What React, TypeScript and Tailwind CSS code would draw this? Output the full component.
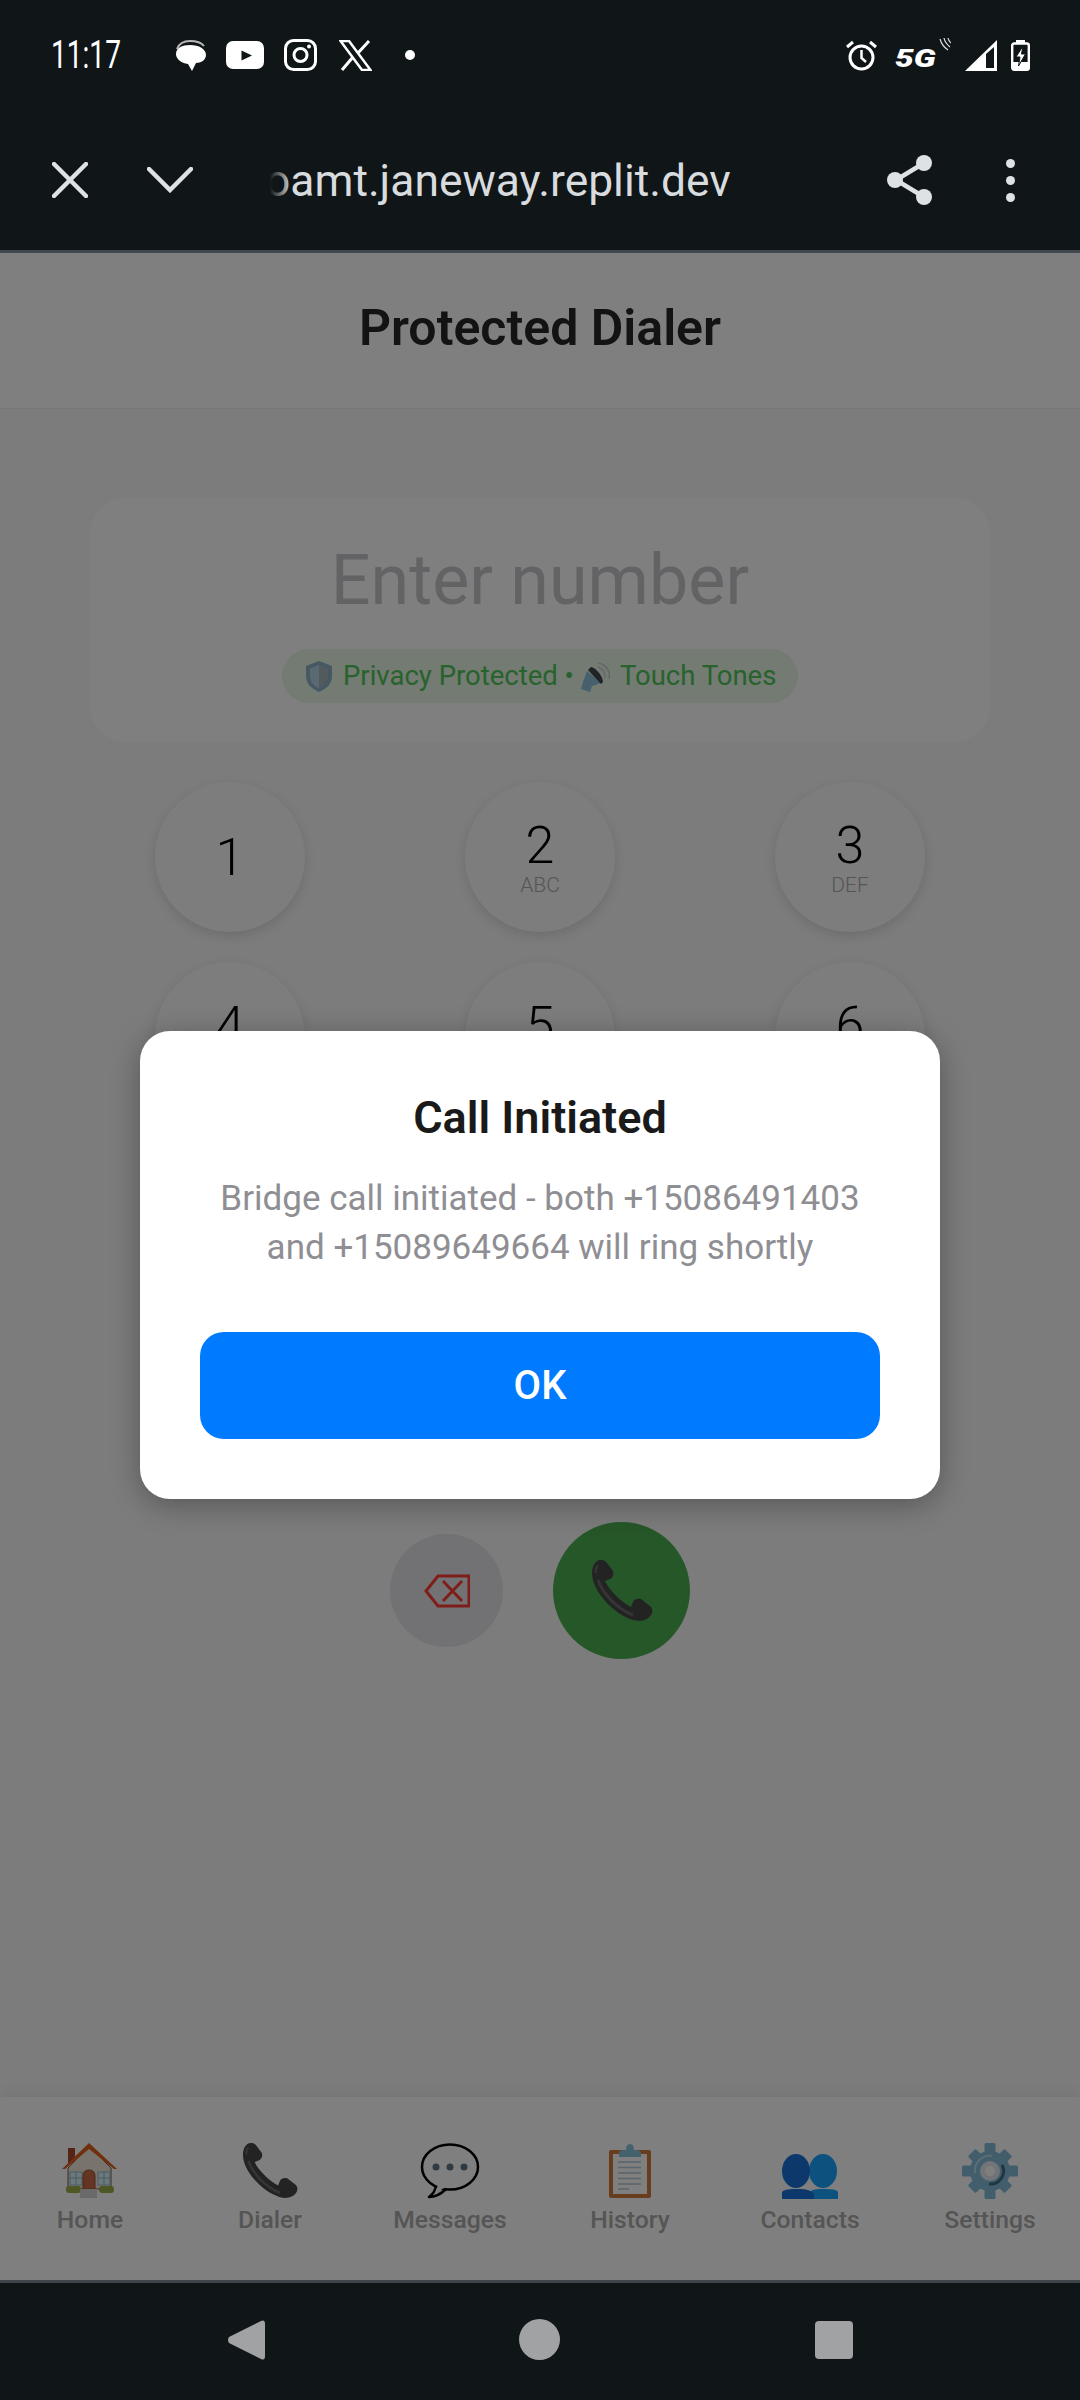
// keys in the last two rows sit fully behind the alert, so they carry no text
const keys = [
  [['1', ''], ['2', 'ABC'], ['3', 'DEF']],
  [['4', '\u00a0'], ['5', '\u00a0'], ['6', '\u00a0']],
  [['', ''], ['', ''], ['', '']],
  [['', ''], ['', ''], ['', '']],
];

function HomeEmoji() {
  return (
    <svg width="56" height="56" viewBox="0 0 56 56">
      <rect x="6" y="5" width="7" height="15" fill="#a84a2c" />
      <path d="M27 3 L6 25 V46 H49 V25 Z" fill="#f0e8da" stroke="#6a5a4c" strokeWidth="1" />
      <path d="M0 26 L27 0 L55 26 L52 26 L27 6 L3 26 Z" fill="#e0601c" />
      <rect x="8" y="29" width="12" height="13" fill="#d8f2fa" stroke="#8fb8c8" strokeWidth="1" />
      <rect x="36" y="29" width="12" height="13" fill="#d8f2fa" stroke="#8fb8c8" strokeWidth="1" />
      <path d="M14 29 V42 M8 35 H20 M42 29 V42 M36 35 H48" stroke="#8fb8c8" strokeWidth="1" />
      <path d="M21 46 V33 Q21 27 27 27 Q33 27 33 33 V46 Z" fill="#c86a46" stroke="#9a4a2c" strokeWidth="1" />
      <rect x="4" y="43" width="15" height="7" rx="3" fill="#9ab04a" />
      <rect x="37" y="43" width="15" height="7" rx="3" fill="#9ab04a" />
      <rect x="18" y="46" width="17" height="9" fill="#d4d4d4" />
    </svg>
  );
}

function PhoneGlyph({ size, fill, shine }: { size: number; fill: string; shine: string }) {
  return (
    <svg width={size} height={size} viewBox="0 0 62 62">
      <path d="M6 1 C10 -1 14 0 16 3 L22 11 C23 14 22 18 19 19 L14 21 C18 30 30 42 40 47 L42 42 C43 39 47 38 50 39 L59 46 C62 49 62 52 60 55 C57 60 50 62 42 60 C25 55 6 36 2 20 C0 12 1 5 6 1 Z" fill={fill} />
      <path d="M7 20 C12 34 26 49 42 55" stroke={shine} strokeWidth="3" fill="none" />
      <path d="M7 5 Q4 9 5 13" stroke={shine} strokeWidth="2" fill="none" />
    </svg>
  );
}

function BubbleEmoji() {
  return (
    <svg width="60" height="56" viewBox="0 0 60 56">
      <path d="M16 41 Q16 49 9 54 Q18 54 26 46" fill="#ffffff" stroke="#000" strokeWidth="2.500" strokeLinejoin="round" />
      <ellipse cx="30" cy="24" rx="28" ry="22.500" fill="#ffffff" stroke="#000" strokeWidth="2.500" />
      <path d="M18 42 L15 50 L26 44 Z" fill="#ffffff" />
      <circle cx="16" cy="24" r="3.500" fill="#5f7484" />
      <circle cx="30" cy="24" r="3.500" fill="#5f7484" />
      <circle cx="44" cy="24" r="3.500" fill="#5f7484" />
    </svg>
  );
}

function ClipboardEmoji() {
  return (
    <svg width="42" height="55" viewBox="0 0 42 55">
      <rect x="0" y="6" width="42" height="48" rx="2" fill="#cf7a3a" />
      <rect x="4" y="10" width="34" height="40" fill="#ffffff" />
      <path d="M9 18H32M9 23.500H32M9 29H32M9 34.500H32M9 40H32M9 45H20" stroke="#b4c8d4" strokeWidth="1.500" />
      <path d="M10 13 H32 V9 Q32 6 27 6 H25 Q25 0 21 0 Q17 0 17 6 H15 Q10 6 10 9 Z" fill="#88c4d6" />
    </svg>
  );
}

function PeopleEmoji() {
  return (
    <svg width="56" height="45" viewBox="0 0 56 45">
      <ellipse cx="41" cy="17" rx="14" ry="17" fill="#1aa4ff" />
      <path d="M26 45 V39 Q30 35 38 35 H44 Q55 35 56 38 V45 Z" fill="#1aa4ff" />
      <ellipse cx="14" cy="17" rx="14" ry="17" fill="#1870d8" />
      <path d="M0 45 V38 Q2 35 12 35 H18 Q28 35 32 40 V45 Z" fill="#1870d8" />
    </svg>
  );
}

function GearEmoji() {
  return (
    <svg width="56" height="56" viewBox="0 0 56 56">
      <g fill="#84bcd8">
        <circle cx="28" cy="28" r="20" />
        <rect x="22.500" y="0" width="11" height="56" rx="1.500" />
        <rect x="0" y="22.500" width="56" height="11" rx="1.500" />
        <rect x="22.500" y="2" width="11" height="52" rx="1.500" transform="rotate(45 28 28)" />
        <rect x="22.500" y="2" width="11" height="52" rx="1.500" transform="rotate(-45 28 28)" />
      </g>
      <path d="M13 30 A15 15 0 0 1 30 13" stroke="#b4dcec" strokeWidth="2" fill="none" />
      <path d="M40 22 A13 13 0 0 1 27 41" stroke="#3c7084" strokeWidth="3" fill="none" />
      <circle cx="28" cy="28" r="10" fill="#e4eaee" />
      <circle cx="28" cy="28" r="5" fill="#ffffff" />
    </svg>
  );
}

function ShieldEmoji() {
  return (
    <svg width="26" height="31" viewBox="0 0 26 31" className="shrink-0">
      <path d="M13 0 L26 5 V15 C26 23 20 28 13 31 C6 28 0 23 0 15 V5 Z" fill="#8cb0c4" />
      <path d="M13 4 L22 7.500 V15 C22 21 18 25 13 27.500 Z" fill="#a4b4bc" />
      <path d="M13 4 L4 7.500 V15 C4 21 8 25 13 27.500 Z" fill="#b4d4e4" />
    </svg>
  );
}

function SpeakerEmoji() {
  return (
    <svg width="32" height="32" viewBox="0 0 32 32" className="shrink-0">
      <path d="M18 3 A13 13 0 0 1 29 19" stroke="#c8ced2" strokeWidth="1.500" fill="none" />
      <path d="M18 7 A10 10 0 0 1 25 18" stroke="#c8ced2" strokeWidth="1.500" fill="none" />
      <path d="M7 11 L21 23 L12 26 L10 32 L1 29 L3 22 Z" fill="#8cc0dc" />
      <path d="M8 10 L11 7 C15 7 23 16 23 22 L21 24 Z" fill="#40484e" />
    </svg>
  );
}

const tabs = [
  { label: 'Home', icon: <HomeEmoji /> },
  { label: 'Dialer', icon: <PhoneGlyph size={56} fill="#464646" shine="#6a6a6a" /> },
  { label: 'Messages', icon: <BubbleEmoji /> },
  { label: 'History', icon: <ClipboardEmoji /> },
  { label: 'Contacts', icon: <PeopleEmoji /> },
  { label: 'Settings', icon: <GearEmoji /> },
];

function StatusBar() {
  return (
    <div className="h-[84px] flex items-end justify-between pl-[51px] pr-[50px] pb-[13px]">
      <div className="flex items-center">
        <span className="w-[124px] text-[39px] leading-[32px] text-white origin-left scale-x-[0.72]">11:17</span>
        <div className="flex items-center">
          {/* chat bubbles */}
          <svg width="31" height="31" viewBox="0 0 31 31" className="mr-[20px]">
            <path d="M2 9 Q5 1 15 1 Q25 1 29 6" stroke="#b8b8b8" strokeWidth="2" fill="none" />
            <path d="M15 5 C24 5 31 9 31 15 C31 20 26 23 21 23 L17 31 L13 24 C6 23 1 19 1 14 C1 8 7 5 15 5 Z" fill="#fff" />
          </svg>
          {/* youtube */}
          <svg width="38" height="28" viewBox="0 0 38 28" className="mr-[20px]">
            <rect width="38" height="28" rx="7" fill="#fff" />
            <path d="M15.500 9.500 L26 14.500 L15.500 19.500 Z" fill="#101518" />
          </svg>
          {/* instagram */}
          <svg width="33" height="32" viewBox="0 0 33 32" className="mr-[22px]">
            <rect x="1.500" y="1.500" width="30" height="29" rx="8" fill="none" stroke="#fff" strokeWidth="3" />
            <circle cx="16.500" cy="16" r="6.500" fill="none" stroke="#fff" strokeWidth="3" />
            <circle cx="25" cy="7.500" r="2" fill="#fff" />
          </svg>
          {/* x */}
          <svg width="33" height="31" viewBox="0 0 33 31" className="mr-[33px]">
            <path d="M1.500 1 H10 L31.500 30 H23 Z" fill="none" stroke="#fff" strokeWidth="2.500" />
            <path d="M30 1 L19 13 M14 17 L3 30" stroke="#fff" strokeWidth="3" />
          </svg>
          <div className="w-[10px] h-[10px] rounded-full bg-white" />
        </div>
      </div>
      <div className="flex items-center">
        {/* alarm */}
        <svg width="31" height="31" viewBox="0 0 31 31" className="mr-[18px]">
          <circle cx="15.500" cy="17.500" r="11.500" fill="none" stroke="#fff" strokeWidth="3" />
          <path d="M15.500 10 V18 L20 22" fill="none" stroke="#fff" strokeWidth="2.500" />
          <path d="M1 7 L7 2 M30 7 L24 2" stroke="#fff" strokeWidth="3" />
        </svg>
        <div className="relative w-[56px] h-[32px] mr-[14px]">
          <span className="block mt-[3px] text-[26px] leading-[32px] font-black italic text-white origin-left scale-x-[1.28]">5G</span>
          <svg width="12" height="13" viewBox="0 0 12 13" className="absolute left-[44px] -top-[1px]">
            <path d="M1 1 Q3 8 9 12 M5 0 Q6 5 11 9 M9 0 Q9.500 3 12 5" stroke="#ddd" strokeWidth="1.200" fill="none" />
          </svg>
        </div>
        {/* signal */}
        <svg width="32" height="31" viewBox="0 0 32 31" className="mr-[14px]">
          <path d="M32 0 V31 H0 Z" fill="#fff" />
          <path d="M21 14 L29 7 V28 H21 Z" fill="#101518" />
        </svg>
        {/* battery */}
        <svg width="19" height="31" viewBox="0 0 19 31">
          <rect x="5" y="0" width="9" height="4" fill="#fff" />
          <rect x="1.200" y="3.500" width="16.600" height="26.300" rx="2" fill="none" stroke="#fff" strokeWidth="2.400" />
          <rect x="2" y="22" width="15" height="8" fill="#fff" />
          <path d="M12 6 L5 17 H9 L7.500 26 L14.500 14 H10.500 Z" fill="#fff" stroke="#101518" strokeWidth="1" />
        </svg>
      </div>
    </div>
  );
}

function BrowserBar() {
  return (
    <div className="h-[169px] flex items-center border-b-[3px] border-[#41484d] pt-[26px]">
      <svg width="36" height="36" viewBox="0 0 36 36" className="ml-[52px]">
        <path d="M2 2 L34 34 M34 2 L2 34" stroke="#dfe2e4" strokeWidth="4.500" strokeLinecap="round" />
      </svg>
      <svg width="46" height="26" viewBox="0 0 46 26" className="ml-[59px]">
        <path d="M2 2 L23 23 L44 2" stroke="#dfe2e4" strokeWidth="4.500" fill="none" strokeLinecap="round" />
      </svg>
      <div className="relative ml-[77px] mt-[1px] w-[470px] overflow-hidden text-[44.4px] leading-[56px] text-[#d8dcdf] whitespace-nowrap">
        <div className="-ml-[5px]">oamt.janeway.replit.dev</div>
        <div className="absolute inset-y-0 left-0 w-[22px] bg-gradient-to-r from-[#101518] to-transparent" />
      </div>
      <svg width="46" height="50" viewBox="0 0 46 50" className="ml-[147px]">
        <path d="M37 8 L9 25 L37 42" stroke="#dfe2e4" strokeWidth="4.500" fill="none" />
        <circle cx="37" cy="8" r="8" fill="#dfe2e4" />
        <circle cx="8" cy="25" r="8" fill="#dfe2e4" />
        <circle cx="37" cy="42" r="8" fill="#dfe2e4" />
      </svg>
      <div className="ml-[73px] flex flex-col gap-[8px]">
        <div className="w-[9px] h-[9px] rounded-full bg-[#dfe2e4]" />
        <div className="w-[9px] h-[9px] rounded-full bg-[#dfe2e4]" />
        <div className="w-[9px] h-[9px] rounded-full bg-[#dfe2e4]" />
      </div>
    </div>
  );
}

function Dialer() {
  return (
    <div className="flex-1 flex flex-col overflow-hidden">
      <div className="h-[156px] bg-white border-b border-[#ececec] flex items-center justify-center pb-[5px]">
        <h1 className="text-[50px] font-semibold text-[#262626]">Protected Dialer</h1>
      </div>
      <div className="mt-[89px] mx-[90px] h-[244px] bg-[#fefefe] rounded-[36px] flex flex-col items-center pt-[40px]">
        <div className="text-[70px] leading-[84px] text-[#c7c7cc]">Enter number</div>
        <div className="mt-[27px] h-[54px] w-[516px] rounded-full bg-[#e6f6e4] flex items-center pl-[24px] text-[#50c45a] text-[27.5px] whitespace-nowrap">
          <ShieldEmoji />
          <span className="ml-[11px]">Privacy Protected •</span>
          <span className="ml-[6px]"><SpeakerEmoji /></span>
          <span className="ml-[8px]">Touch Tones</span>
        </div>
      </div>
      <div className="mt-[40px] px-[155px] flex flex-col gap-[30px]">
        {keys.map((row, i) => (
          <div key={i} className="flex justify-between">
            {row.map(([digit, letters], j) => (
              <div key={j} className="w-[150px] h-[150px] rounded-full bg-[#fafafa] shadow-[0_4px_12px_rgba(0,0,0,0.12)] flex flex-col items-center justify-center">
                <span className="mt-[1px] text-[52px] leading-[54px] font-light text-black">{digit}</span>
                {letters && <span className="text-[21px] leading-[24px] font-light text-[#aaaaaa]">{letters}</span>}
              </div>
            ))}
          </div>
        ))}
      </div>
      <div className="mt-[50px] flex items-center pl-[390px]">
        <div className="w-[113px] h-[113px] rounded-full bg-[#e5e5ea] flex items-center justify-center">
          <svg width="46" height="34" viewBox="0 0 46 34">
            <path d="M45 2 H14 L2 17 L14 32 H45 Z" fill="none" stroke="#ff3b30" strokeWidth="3" />
            <path d="M19 7 L38 27 M38 7 L19 27" stroke="#ff3b30" strokeWidth="3" />
          </svg>
        </div>
        <div className="ml-[50px] w-[137px] h-[137px] rounded-full bg-[#4caf50] flex items-center justify-center">
          <PhoneGlyph size={62} fill="#464646" shine="#6a6a6a" />
        </div>
      </div>
    </div>
  );
}

function BottomTabs() {
  return (
    <div className="h-[186px] bg-white shadow-[0_-4px_12px_rgba(0,0,0,0.06)] border-b-[3px] border-b-[#7d8a94] flex">
      {tabs.map((tab) => (
        <div key={tab.label} className="w-[180px] flex flex-col items-center pt-[46px]">
          <div className="h-[56px] flex items-end justify-center">{tab.icon}</div>
          <span className="mt-[6px] text-[24.7px] leading-[30px] font-medium text-[#aaaaaa]">{tab.label}</span>
        </div>
      ))}
    </div>
  );
}

function NavBar() {
  return (
    <div className="h-[117px] flex items-start pt-[36px]">
      <svg width="38" height="42" viewBox="0 0 38 42" className="ml-[227px]">
        <path d="M34 2 Q38 0 38 5 V37 Q38 42 34 40 L2 24 Q0 21 2 18 Z" fill="#a0a2a4" />
      </svg>
      <div className="ml-[254px] w-[41px] h-[41px] rounded-full bg-[#a0a2a4]" />
      <div className="ml-[255px] mt-[2px] w-[38px] h-[38px] rounded-[4px] bg-[#a0a2a4]" />
    </div>
  );
}

export default function App() {
  return (
    <div className="w-[1080px] h-[2400px] bg-[#101518] flex flex-col overflow-hidden font-['Roboto',sans-serif]">
      <StatusBar />
      <BrowserBar />
      <div className="relative h-[2030px] bg-[#f8f8f8] flex flex-col">
        <Dialer />
        <BottomTabs />
        {/* dim layer with the alert */}
        <div className="absolute inset-0 bg-black/50 flex items-center justify-center pb-[6px]">
          <div className="w-[800px] h-[468px] bg-white rounded-[30px] shadow-[0_6px_30px_rgba(0,0,0,0.3)] flex flex-col items-center pt-[60px] px-[60px]">
            <h2 className="text-[45px] leading-[54px] font-semibold text-[#1a1a1a]">Call Initiated</h2>
            <p className="mt-[29px] text-[35px] leading-[49px] text-[#8e8e93] text-center whitespace-nowrap">
              Bridge call initiated - both +15086491403
              <br />
              and +15089649664 will ring shortly
            </p>
            <div className="mt-[60px] w-full h-[107px] rounded-[24px] bg-[#007aff] flex items-center justify-center text-[40px] font-medium text-white">OK</div>
          </div>
        </div>
      </div>
      <NavBar />
    </div>
  );
}
